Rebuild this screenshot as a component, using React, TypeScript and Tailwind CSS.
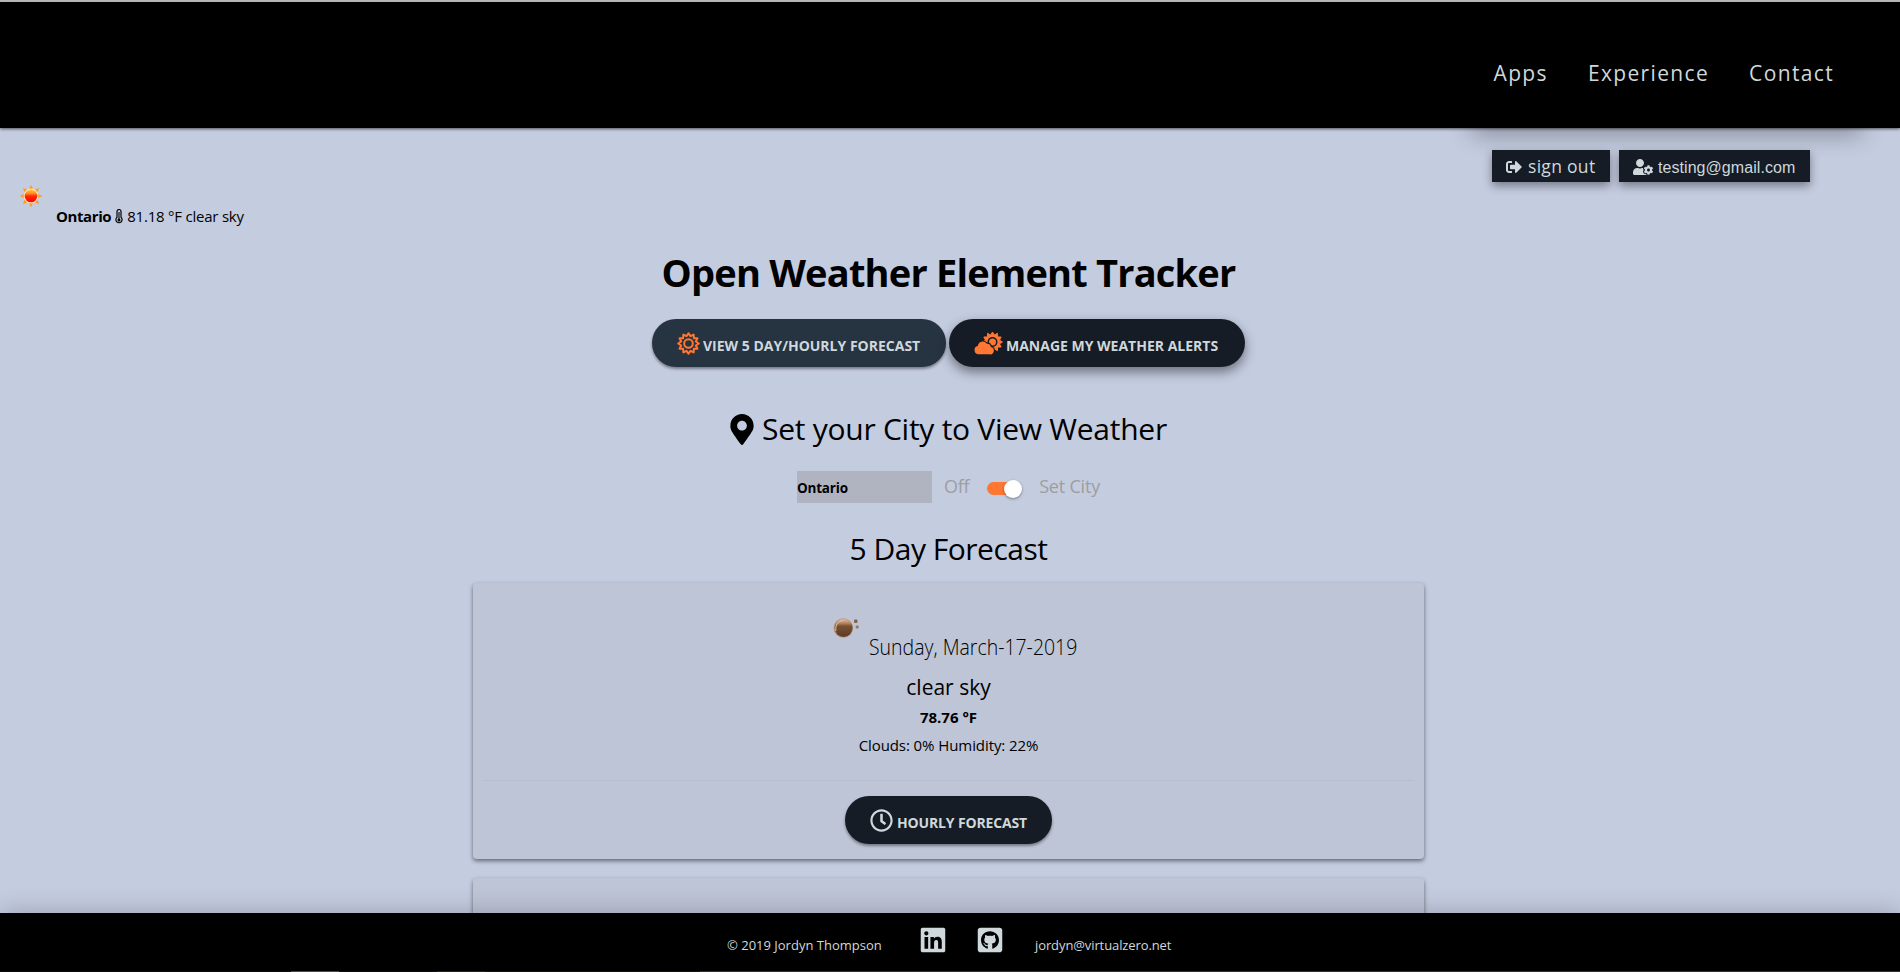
import { FaSignOutAlt, FaUserCog, FaMapMarkerAlt, FaRegClock, FaLinkedin, FaGithubSquare } from "react-icons/fa";

function burst(cx: number, cy: number, outer: number, inner: number, tips: number) {
  return Array.from({ length: tips * 2 }, (_, i) => {
    const r = i % 2 ? inner : outer;
    const a = (Math.PI * i) / tips - Math.PI / 2;
    return `${(cx + r * Math.cos(a)).toFixed(2)},${(cy + r * Math.sin(a)).toFixed(2)}`;
  }).join(" ");
}

function SunIcon() {
  return (
    <svg viewBox="0 0 24 24" className="h-6 w-6">
      <defs>
        <linearGradient id="sun" x1="0" y1="0" x2="0" y2="1">
          <stop offset="0" stopColor="#ffc83c" />
          <stop offset=".3" stopColor="#ff8a20" />
          <stop offset=".5" stopColor="#ff2a08" />
          <stop offset="1" stopColor="#ff0000" />
        </linearGradient>
      </defs>
      {[0, 45, 90, 135, 180, 225, 270, 315].map((a) => (
        <path key={a} d="M12 .7 L14 5 H10 Z" fill="#ff9a1a" transform={`rotate(${a} 12 12)`} />
      ))}
      <circle cx="12" cy="12" r="7.4" fill="#fde3b5" />
      <circle cx="12" cy="12" r="6.3" fill="url(#sun)" />
    </svg>
  );
}

function MoonIcon() {
  return (
    <svg viewBox="0 0 28 22" className="h-[22px] w-7 shrink-0">
      <defs>
        <linearGradient id="moon" x1="0" y1="0" x2="0" y2="1">
          <stop offset="0" stopColor="#e0bfa6" />
          <stop offset=".22" stopColor="#b98663" />
          <stop offset=".4" stopColor="#78502f" />
          <stop offset="1" stopColor="#5a3c28" />
        </linearGradient>
      </defs>
      <circle cx="11.3" cy="11" r="9.8" fill="#b8967d" />
      <circle cx="11.600" cy="11" r="9" fill="url(#moon)" />
      <path d="M3.800 14 Q2.800 5 10.500 3.500" stroke="#e2c4ae" strokeWidth="1" fill="none" />
      <rect x="22" y="2.500" width="3.500" height="3.500" rx="1" fill="#87614c" />
      <rect x="23.700" y="8.600" width="3" height="3" rx="1" fill="#9a7762" />
    </svg>
  );
}

function BurstIcon() {
  return (
    <svg viewBox="0 0 23 23" className="mr-[3px] h-[23px] w-[23px] shrink-0" fill="none" stroke="#ff7733" strokeWidth="2" strokeLinejoin="round">
      <polygon points={burst(11.5, 11.5, 10.3, 7.6, 12)} />
      <circle cx="11.5" cy="11.5" r="4.300" />
    </svg>
  );
}

function CloudBurstIcon() {
  return (
    <svg viewBox="0 0 29 23" className="mr-[3px] h-[23px] w-[29px] shrink-0">
      <polygon points={burst(18.5, 10, 10, 7.2, 12)} fill="#ff7733" stroke="#ff7733" strokeLinejoin="round" />
      <circle cx="18.500" cy="10" r="5" fill="#151c25" />
      <circle cx="18.500" cy="10" r="3.500" fill="#ff7733" />
      <path
        d="M4.700 22.300 a4.200 4.200 0 0 1 -.9 -8.300 a5 5 0 0 1 9 -2.300 a3.800 3.800 0 0 1 4 3.300 a3.700 3.700 0 0 1 -1.300 7.300 Z"
        fill="#ff7733"
        stroke="#151c25"
        strokeWidth="2.400"
        paintOrder="stroke"
      />
    </svg>
  );
}

function Thermometer() {
  return (
    <svg viewBox="0 0 8 15" className="mx-1 h-[15px] w-2" fill="none" stroke="#000">
      <path d="M2 8.300 V2.500 a2 2 0 0 1 4 0 V8.300 a3.100 3.100 0 1 1 -4 0 Z" strokeWidth="1.200" />
      <circle cx="4" cy="11" r="1.500" fill="#000" stroke="none" />
      <path d="M4 3 V11" strokeWidth="1.100" />
    </svg>
  );
}

export default function App() {
  return (
    <div className="flex h-[972px] w-[1900px] flex-col overflow-hidden bg-[#c4cce0] font-['Open_Sans','Noto_Sans',sans-serif] whitespace-nowrap text-black">
      <header className="relative z-10 h-[128px] shrink-0 border-t-2 border-[#b5b5b5] bg-black shadow-[0_1px_3px_rgba(0,0,0,0.6)]">
        <nav className="flex h-full items-start justify-end gap-[40px] pt-[55px] pr-[66px] text-[21px] leading-8 tracking-[1.350px] text-[#cfd8dc]">
          <a>Apps</a>
          <a>Experience</a>
          <a>Contact</a>
        </nav>
      </header>

      <main className="relative flex min-h-0 flex-1 flex-col">
        <div className="absolute top-[-18px] right-[38px] h-3.5 w-[390px] shadow-[0_8px_24px_rgba(0,0,0,0.45)]" />
        <div className="mt-[22px] flex h-8 shrink-0 justify-end gap-[9px] pr-[90px] text-[#cfd8dc]">
          <button className="flex w-[118px] items-center bg-[#151c25] pl-3.5 text-[17.500px] tracking-[0.300px] shadow-[0_4px_10px_rgba(0,0,0,0.4)]">
            <FaSignOutAlt className="mt-0.5 mr-1.5 h-4 w-4" />
            <span className="mt-px">sign out</span>
          </button>
          <button className="flex w-[191px] items-center bg-[#151c25] pl-3.5 font-['Liberation_Sans',Arial,sans-serif] text-[16px] tracking-[0.060px] shadow-[0_4px_10px_rgba(0,0,0,0.4)]">
            <FaUserCog className="mt-0.5 mr-[5px] h-4 w-5" />
            <span className="mt-[3px]">testing@gmail.com</span>
          </button>
        </div>

        <div className="mt-0.5 flex h-[47px] shrink-0 pl-[19px]">
          <SunIcon />
          <div className="mt-[17px] ml-[13px] flex items-center text-[15px] leading-6">
            <b className="tracking-[-0.400px]">Ontario</b>
            <Thermometer />
            <span className="tracking-[-0.220px]">81.18 °F clear sky</span>
          </div>
        </div>

        <section className="flex flex-col items-center pr-[3px]">
          <h1 className="mt-[15px] text-[38px] leading-[52px] font-bold tracking-[-0.800px]">Open Weather Element Tracker</h1>
          <div className="mt-[21px] flex gap-[3px] text-[14px] font-bold text-[#cfd8dc]">
            <button className="flex h-12 w-[294px] items-center rounded-full bg-[#263340] pl-[25px] shadow-[0_2px_3px_rgba(0,0,0,0.4)]">
              <BurstIcon />
              <span className="mt-1">VIEW 5 DAY/HOURLY FORECAST</span>
            </button>
            <button className="flex h-12 w-[296px] items-center rounded-full bg-[#151c25] pl-[25px] shadow-[0_5px_12px_rgba(0,0,0,0.45)]">
              <CloudBurstIcon />
              <span className="mt-1">MANAGE MY WEATHER ALERTS</span>
            </button>
          </div>
          <h2 className="mt-[42px] flex items-center text-[30px] leading-10 font-normal tracking-[-0.270px]">
            <FaMapMarkerAlt className="mr-2 h-[31px] w-6" />
            <span>Set your City to View Weather</span>
          </h2>
          <div className="mt-[22px] flex h-8 items-center text-[18px] text-[#9e9e9e]">
            <div className="flex h-8 w-[135px] items-center bg-[#b0b4c0] pt-0.5 text-[13.500px] font-bold tracking-[-0.200px] text-black">Ontario</div>
            <span className="-mt-0.5 ml-3 tracking-[-0.300px]">Off</span>
            <div className="relative mt-0.5 ml-[18px] h-[13px] w-[34px] rounded-full bg-[#ff7733]">
              <div className="absolute -top-0.5 left-[17px] h-[18px] w-[18px] rounded-full bg-white shadow-[0_1px_3px_rgba(0,0,0,0.4)]" />
            </div>
            <span className="-mt-0.5 ml-[18px] tracking-[-0.200px]">Set City</span>
          </div>
          <h2 className="mt-[26px] text-[30px] leading-10 font-normal tracking-[-0.500px]">5 Day Forecast</h2>
          <article className="mt-[14px] flex h-[276px] w-[951px] shrink-0 flex-col items-center rounded-sm bg-[#bec5d7] shadow-[0_2px_4px_rgba(0,0,0,0.5)]">
            <div className="mt-[34px] flex h-[47px] pl-3">
              <MoonIcon />
              <div className="mt-[13px] ml-[9px] w-[209px]">
                <span className="inline-block origin-left scale-x-[0.885] text-[22px] leading-8 font-light">Sunday, March-17-2019</span>
              </div>
            </div>
            <div className="mt-[7px] text-[21px] leading-8">clear sky</div>
            <div className="text-[15px] leading-7 font-bold">78.76 °F</div>
            <div className="text-[15px] leading-7 tracking-[-0.080px]">Clouds: 0% Humidity: 22%</div>
            <div className="mt-[21px] h-px w-[931px] bg-[#b6bece]" />
            <button className="mt-[15px] flex h-12 w-[207px] items-center rounded-full bg-[#151c25] pl-[25px] text-[14px] font-bold tracking-[-0.150px] text-[#cfd8dc] shadow-[0_2px_3px_rgba(0,0,0,0.4)]">
              <FaRegClock className="mr-1 h-[23px] w-[23px]" />
              <span className="mt-1">HOURLY FORECAST</span>
            </button>
          </article>
          <article className="mt-[19px] h-[276px] w-[951px] shrink-0 rounded-sm bg-[#bec5d7] shadow-[0_2px_4px_rgba(0,0,0,0.5)]" />
        </section>
      </main>

      <footer className="relative z-10 h-[59px] shrink-0 bg-black text-[13px] leading-5 text-[#cfd8dc] shadow-[0_-2px_24px_rgba(0,0,0,0.2)]">
        <div className="flex h-[58px] items-start pl-[727px]">
          <span className="mt-[22px] w-[194px]">© 2019 Jordyn Thompson</span>
          <FaLinkedin className="mt-[13px] -ml-0.5 h-7 w-7" />
          <FaGithubSquare className="mt-[13px] ml-[29px] h-7 w-7" />
          <span className="mt-[22px] ml-[31px] tracking-[-0.100px]">jordyn@virtualzero.net</span>
        </div>
        <div className="flex h-px bg-[#0c0c0c]">
          <div className="ml-[291px] h-px w-12 bg-[#4a4a4a]" />
          <div className="ml-[98px] h-px w-12 bg-[#24241c]" />
          <div className="h-px w-[215px] bg-[#14140c]" />
          <div className="h-px flex-1 bg-[#333]" />
        </div>
      </footer>
    </div>
  );
}
